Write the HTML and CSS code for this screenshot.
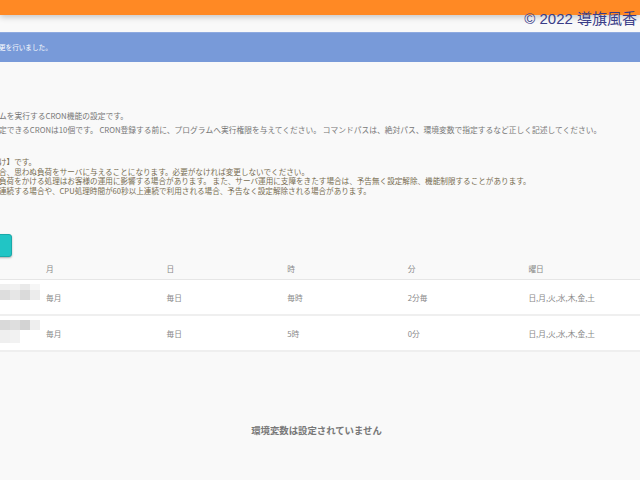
FILE: index.html
```html
<!DOCTYPE html>
<html lang="ja">
<head>
<meta charset="utf-8">
<link rel="stylesheet" href="styles.css">
</head>
<body>
<header class="topbar"></header>
<div class="copyright">© 2022 導旗風香</div>
<div class="alert">更を行いました。</div>
<main class="content">
  <section class="info">
    <p>ムを実行するCRON機能の設定です。</p>
    <p>定できるCRONは10個です。 CRON登録する前に、プログラムへ実行権限を与えてください。 コマンドパスは、絶対パス、環境変数で指定するなど正しく記述してください。</p>
  </section>
  <section class="warning">
    <p>け】です。</p>
    <p>合、思わぬ負荷をサーバに与えることになります。必要がなければ変更しないでください。</p>
    <p>負荷をかける処理はお客様の運用に影響する場合があります。 また、サーバ運用に支障をきたす場合は、予告無く設定解除、機能制限することがあります。</p>
    <p>連続する場合や、CPU処理時間が60秒以上連続で利用される場合、予告なく設定解除される場合があります。</p>
  </section>
  <div class="btn"></div>
  <div class="table">
    <div class="row head">
      <div class="cell"></div>
      <div class="cell">月</div>
      <div class="cell">日</div>
      <div class="cell">時</div>
      <div class="cell">分</div>
      <div class="cell">曜日</div>
    </div>
    <div class="row body">
      <div class="cell mosaic-cell">
        <svg class="mosaic" width="40" height="34" viewBox="0 0 40 34">
          <rect x="0" y="4" width="10" height="6" fill="#efefef"/>
          <rect x="10" y="4" width="10" height="6" fill="#f1f1f1"/>
          <rect x="20" y="4" width="10" height="6" fill="#e9e9e9"/>
          <rect x="30" y="4" width="10" height="6" fill="#f6f6f6"/>
          <rect x="0" y="10" width="10" height="10" fill="#dddddd"/>
          <rect x="10" y="10" width="10" height="10" fill="#e6e6e6"/>
          <rect x="20" y="10" width="10" height="10" fill="#dadada"/>
          <rect x="30" y="10" width="10" height="10" fill="#ececec"/>
        </svg>
      </div>
      <div class="cell">毎月</div>
      <div class="cell">毎日</div>
      <div class="cell">毎時</div>
      <div class="cell">2分毎</div>
      <div class="cell">日,月,火,水,木,金,土</div>
    </div>
    <div class="row body">
      <div class="cell mosaic-cell">
        <svg class="mosaic" width="40" height="34" viewBox="0 0 40 34">
          <rect x="0" y="4" width="10" height="10" fill="#d9d9d9"/>
          <rect x="10" y="4" width="10" height="10" fill="#dedede"/>
          <rect x="20" y="4" width="10" height="10" fill="#d3d3d3"/>
          <rect x="30" y="4" width="10" height="10" fill="#eeeeee"/>
          <rect x="0" y="14" width="10" height="13" fill="#efefef"/>
          <rect x="10" y="14" width="10" height="13" fill="#f2f2f2"/>
        </svg>
      </div>
      <div class="cell">毎月</div>
      <div class="cell">毎日</div>
      <div class="cell">5時</div>
      <div class="cell">0分</div>
      <div class="cell">日,月,火,水,木,金,土</div>
    </div>
  </div>
  <p class="empty">環境変数は設定されていません</p>
</main>
</body>
</html>
```

FILE: styles.css
```css
html, body {
  margin: 0;
  padding: 0;
}
body {
  background: #f9f9f9;
  font-family: "Noto Sans CJK JP", "Noto Sans", sans-serif;
  width: 640px;
  height: 480px;
  overflow: hidden;
  position: relative;
}
p {
  margin: 0;
  white-space: nowrap;
}
.topbar {
  height: 15px;
  background: #ff8924;
  box-shadow: 0 2px 6px rgba(0, 0, 0, 0.22);
  position: relative;
  z-index: 1;
}
.copyright {
  position: absolute;
  top: 9px;
  right: 3px;
  z-index: 2;
  font-family: "Liberation Sans", "Noto Sans CJK JP", sans-serif;
  font-size: 15px;
  line-height: 20px;
  color: #3a3d88;
  white-space: nowrap;
}
.alert {
  margin-top: 17px;
  height: 30px;
  box-sizing: border-box;
  border-top: 1px solid #8eaae0;
  background: #789ad9;
  color: #ffffff;
  font-size: 6.6px;
  line-height: 28px;
  margin-left: -1px;
  white-space: nowrap;
}
.content {
  margin-left: -1px;
}
.info {
  margin-top: 47px;
  color: #777777;
  font-size: 7.75px;
  line-height: 14px;
}
.warning {
  margin-top: 20px;
  color: #776c50;
  font-size: 7.6px;
  line-height: 9.6px;
}
.btn {
  margin-top: 39px;
  margin-left: -27px;
  width: 40px;
  height: 23px;
  box-sizing: border-box;
  background: #21c5c5;
  border: 1px solid #1aa9a9;
  border-radius: 3px;
  box-shadow: 0 1px 2px rgba(0, 0, 0, 0.3);
}
.table {
  margin-left: 1px;
  font-size: 7.7px;
  color: #888888;
}
.row {
  display: grid;
  grid-template-columns: 40px repeat(5, 120.6px);
  align-items: center;
}
.row.head {
  height: 23px;
  box-sizing: border-box;
  border-bottom: 1px solid #e6e6e6;
}
.row.body {
  height: 36px;
  box-sizing: border-box;
  background: #ffffff;
  border-bottom: 2px solid #efefef;
}
.cell {
  padding-left: 6px;
  white-space: nowrap;
}
.mosaic-cell {
  padding-left: 0;
  height: 34px;
}
.mosaic {
  display: block;
}
.empty {
  margin-top: 71px;
  text-align: center;
  padding-right: 6px;
  font-size: 9.4px;
  line-height: 14px;
  font-weight: bold;
  color: #777777;
}
```
